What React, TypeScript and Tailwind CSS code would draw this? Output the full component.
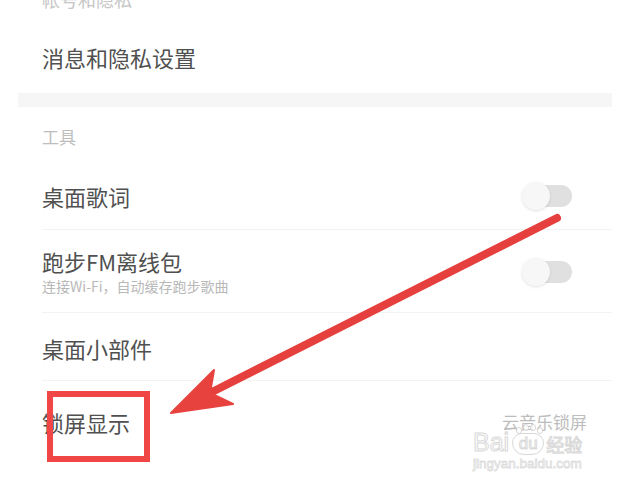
import React from "react";

const cjk = "font-['Noto_Sans_CJK_SC','Noto_Sans',sans-serif]";

function Toggle() {
  return (
    <div className="relative w-[50px] h-[28px]">
      <div className="absolute right-0 top-[3px] w-[40px] h-[22px] rounded-full bg-[#e0e0e0]" />
      <div className="absolute left-0 top-0 w-[28px] h-[28px] rounded-full bg-[#f7f7f7] shadow-[0_1px_3px_rgba(0,0,0,0.12)]" />
    </div>
  );
}

export default function App() {
  return (
    <div className={`relative w-[619px] h-[485px] overflow-hidden bg-white ${cjk}`}>
      <div className="mt-[-13px] h-[24px] leading-[24px] pl-[42px] text-[18px] text-[#c6c6c6]">帐号和隐私</div>
      <div className="h-[82px] pt-[10px] flex items-center pl-[42px] text-[22px] text-[#505050]">消息和隐私设置</div>
      <div className="ml-[18px] mr-[7px] h-[14px] bg-[#f6f6f6]" />
      <div className="h-[60px] flex items-center pl-[42px] text-[17px] text-[#bdbdbd]">工具</div>

      <div className="ml-[42px] mr-[7px] h-[63px] pb-[4px] flex items-center justify-between pr-[40px] border-b border-[#f3f3f3]">
        <span className="text-[22px] text-[#505050]">桌面歌词</span>
        <Toggle />
      </div>

      <div className="ml-[42px] mr-[7px] h-[83px] pt-[1px] flex items-center justify-between pr-[40px] border-b border-[#f3f3f3]">
        <div className="flex flex-col">
          <span className="text-[22px] leading-[26px] text-[#505050]">跑步FM离线包</span>
          <span className="mt-[3px] text-[14px] leading-[18px] text-[#b8b8b8]">连接Wi-Fi，自动缓存跑步歌曲</span>
        </div>
        <Toggle />
      </div>

      <div className="ml-[42px] mr-[7px] h-[68px] pt-[3px] flex items-center border-b border-[#f3f3f3]">
        <span className="text-[22px] text-[#505050]">桌面小部件</span>
      </div>

      <div className="ml-[42px] h-[82px] flex items-center justify-between pr-[32px]">
        <span className="text-[22px] text-[#505050]">锁屏显示</span>
        <span className="text-[17px] text-[#bdbdbd]">云音乐锁屏</span>
      </div>

      {/* red highlight box */}
      <div className="absolute left-[47px] top-[391px] w-[103px] h-[71px] border-[6px] border-[#f04646]" />

      {/* arrow */}
      <svg className="absolute left-0 top-0 pointer-events-none" width="619" height="485" viewBox="0 0 619 485">
        <line x1="557" y1="218" x2="212" y2="392" stroke="#e6403e" strokeWidth="8" strokeLinecap="round" />
        <polygon points="171,413 214,370 210,393 233,404" fill="#e8423f" stroke="#e8423f" strokeWidth="2" strokeLinejoin="round" />
      </svg>

      {/* watermark */}
      <div className="absolute left-[473px] top-[429px] flex flex-col items-start opacity-80 pointer-events-none">
        <div className="flex items-end h-[26px]">
          <span className="font-['Liberation_Sans',sans-serif] text-[25px] leading-[26px] text-white [-webkit-text-stroke:1px_#cfcfcf]">Bai</span>
          <span className="relative ml-[3px] w-[32px] h-[22px] rounded-b-[12px] rounded-t-[10px] border border-[#cfcfcf] flex items-center justify-center font-['Liberation_Sans',sans-serif] text-[17px] leading-[20px] text-white [-webkit-text-stroke:1px_#cfcfcf]">
            du
            <span className="absolute -top-[7px] left-[3px] w-[6px] h-[7px] rounded-full border border-[#cfcfcf] bg-white" />
            <span className="absolute -top-[10px] left-[10px] w-[6px] h-[7px] rounded-full border border-[#cfcfcf] bg-white" />
            <span className="absolute -top-[10px] left-[17px] w-[6px] h-[7px] rounded-full border border-[#cfcfcf] bg-white" />
            <span className="absolute -top-[7px] left-[24px] w-[6px] h-[7px] rounded-full border border-[#cfcfcf] bg-white" />
          </span>
          <span className="ml-[2px] text-[18px] leading-[22px] text-white [-webkit-text-stroke:1px_#cfcfcf]">经验</span>
        </div>
        <span className="mt-[2px] font-['Liberation_Sans',sans-serif] text-[13.5px] leading-[14px] text-white [-webkit-text-stroke:0.8px_#d4d4d4]">jingyan.baidu.com</span>
      </div>
    </div>
  );
}
